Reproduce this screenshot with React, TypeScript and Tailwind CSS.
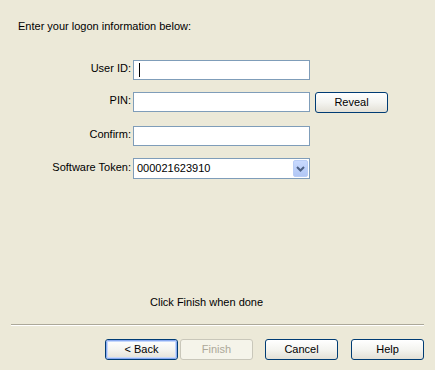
import React from "react";

const font = { fontFamily: '"Liberation Sans", Arial, sans-serif' };

function XpButton({ label, focused, disabled }: { label: string; focused?: boolean; disabled?: boolean }) {
  if (disabled) {
    return (
      <div className="flex h-[21px] w-[73px] items-center justify-center rounded-[3px] border border-[#c9c7ba] bg-[#f5f4ea] text-[#aca899]">
        {label}
      </div>
    );
  }
  return (
    <div className="h-[21px] w-[73px] rounded-[3px] border border-[#003c74] bg-gradient-to-b from-[#ffffff] via-[#f4f4f0] to-[#e3e0d6]">
      <div
        className={
          focused
            ? "flex h-full w-full items-center justify-center rounded-[2px] border border-[#8aaaf0] text-black shadow-[inset_0_0_0_1px_#c6d8fb]"
            : "flex h-full w-full items-center justify-center text-black"
        }
      >
        {label}
      </div>
    </div>
  );
}

function Field({ label, children }: { label: string; children: React.ReactNode }) {
  return (
    <div className="flex items-center">
      <div className="w-[133px] pr-[2px] pb-[3px] text-right">{label}</div>
      {children}
    </div>
  );
}

function TextBox({ caret }: { caret?: boolean }) {
  return (
    <div className="flex h-[20px] w-[177px] items-center border border-[#7f9db9] bg-white pl-[5px]">
      {caret && <div className="h-[14px] w-[1px] bg-black" />}
    </div>
  );
}

export default function App() {
  return (
    <div className="flex h-[370px] w-[435px] flex-col bg-[#ece9d8] text-[11px] text-black" style={font}>
      <div className="pl-[18px] pt-[19px] leading-[14px]">Enter your logon information below:</div>

      <div className="mt-[27px] flex flex-col">
        <Field label="User ID:">
          <TextBox caret />
        </Field>
        <div className="mt-[12px] flex items-start">
          <div className="flex items-center">
            <div className="w-[133px] pr-[2px] pb-[3px] text-right">PIN:</div>
            <TextBox />
          </div>
          <div className="ml-[5px]">
            <XpButton label="Reveal" />
          </div>
        </div>
        <div className="mt-[13px]">
          <Field label="Confirm:">
            <TextBox />
          </Field>
        </div>
        <div className="mt-[12px]">
          <Field label="Software Token:">
            <div className="flex h-[21px] w-[177px] items-center justify-between border border-[#7f9db9] bg-white pl-[3px] pr-[1px]">
              <span>000021623910</span>
              <div className="flex h-[17px] w-[15px] items-center justify-center rounded-[2px] border border-[#b9cdf6] bg-gradient-to-b from-[#c9daff] to-[#b1c7f5]">
                <svg width="9" height="6" viewBox="0 0 9 6">
                  <path d="M1 1 L4.5 4.5 L8 1" fill="none" stroke="#4d6185" strokeWidth="2" />
                </svg>
              </div>
            </div>
          </Field>
        </div>
      </div>

      <div className="flex-1" />

      <div className="pl-[150px] leading-[14px]">Click Finish when done</div>

      <div className="mx-[11px] mt-[15px] border-t border-b border-t-[#aca899] border-b-white" />

      <div className="mt-[13px] mb-[10px] flex pl-[105px]">
        <XpButton label="< Back" focused />
        <div className="ml-[2px]">
          <XpButton label="Finish" disabled />
        </div>
        <div className="ml-[12px]">
          <XpButton label="Cancel" />
        </div>
        <div className="ml-[13px]">
          <XpButton label="Help" />
        </div>
      </div>
    </div>
  );
}
